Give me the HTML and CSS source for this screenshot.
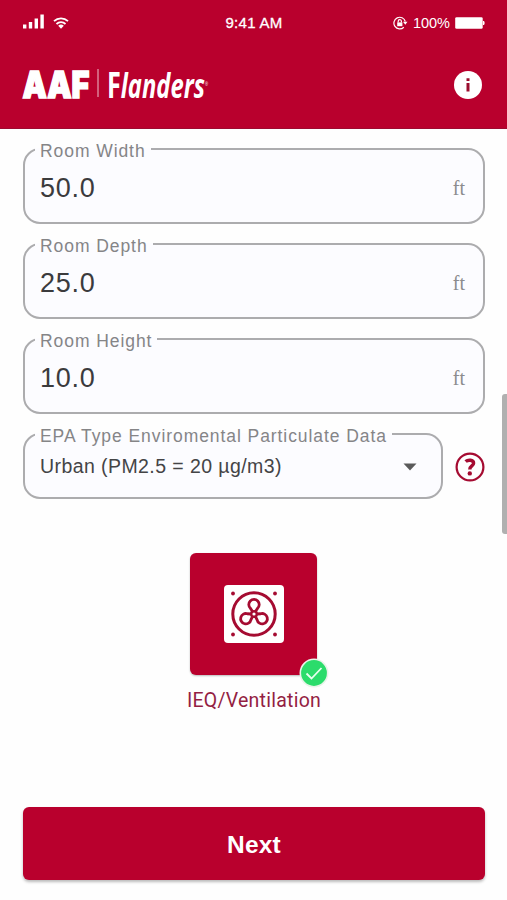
FILE: index.html
```html
<!DOCTYPE html>
<html lang="en">
<head>
<meta charset="utf-8">
<title>AAF Flanders</title>
<link rel="stylesheet" href="styles.css">
</head>
<body>
<header class="header">
  <div class="status">
    <div class="status-left">
      <svg width="22" height="16" viewBox="0 0 22 16" fill="#fff"><rect x="0" y="10.5" width="3.4" height="4"/><rect x="5.8" y="8" width="3.4" height="6.5"/><rect x="11.6" y="4.5" width="3.4" height="10"/><rect x="17.4" y="0.5" width="3.4" height="14"/></svg>
      <svg class="wifi" width="16" height="12" viewBox="0 0 16 12" fill="none" stroke="#fff" stroke-width="1.8"><path d="M1 4.2a10.2 10.2 0 0 1 14 0M3.5 7a6.5 6.5 0 0 1 9 0"/><path d="M5.2 8.8a4 4 0 0 1 5.6 0L8 11.7z" fill="#fff" stroke="none"/></svg>
    </div>
    <div class="status-time">9:41 AM</div>
    <div class="status-right">
      <svg width="15" height="14" viewBox="0 0 15 14" fill="none" stroke="#fff" stroke-width="1.2"><path d="M10.8 11.2A5.8 5.8 0 1 1 12.3 5.5"/><path d="M10 5.8h4.5l-2.2 3z" fill="#fff" stroke="none"/><rect x="4.2" y="6.4" width="5.2" height="3.8" fill="#fff" stroke="none"/><path d="M5.2 6.6V5.2a1.6 1.6 0 0 1 3.2 0v1.4"/></svg>
      <span class="status-pct">100%</span>
      <svg width="30" height="12" viewBox="0 0 30 12" fill="#fff"><rect x="0.2" y="0.2" width="27.5" height="11.6" rx="1.4"/><path d="M28 4h1q1.3 2 0 4h-1z"/></svg>
    </div>
  </div>
  <div class="brand">
    <svg class="logo" width="190" height="36" viewBox="0 0 190 36" fill="#fff">
      <text class="logo-aaf" x="1.5" y="30.5" textLength="67" lengthAdjust="spacingAndGlyphs">AAF</text>
      <rect x="76.5" y="2" width="1" height="28" opacity=".75"/>
      <text class="logo-fl" x="86" y="30.5" textLength="101" lengthAdjust="spacingAndGlyphs"><tspan class="logo-f">F</tspan>landers<tspan class="logo-reg" dy="-12">®</tspan></text>
    </svg>
    <svg width="30" height="30" viewBox="0 0 30 30"><circle cx="15" cy="15" r="14" fill="#fff"/><path d="M13.5 8.2h3v2.8h-3zM13.5 13h3v8.5h-3z" fill="#9b0d2e"/></svg>
  </div>
</header>
<main class="form">
  <fieldset class="field"><legend>Room Width</legend><div class="row"><span class="value">50.0</span><span class="unit">ft</span></div></fieldset>
  <fieldset class="field"><legend>Room Depth</legend><div class="row"><span class="value">25.0</span><span class="unit">ft</span></div></fieldset>
  <fieldset class="field"><legend>Room Height</legend><div class="row"><span class="value">10.0</span><span class="unit">ft</span></div></fieldset>
  <div class="select-row">
    <fieldset class="field field-select"><legend>EPA Type Enviromental Particulate Data</legend><div class="row"><span class="choice">Urban (PM2.5 = 20 µg/m3)</span><svg width="14" height="8" viewBox="0 0 14 8"><path d="M.5.5h13L7 7.5z" fill="#5a5a5a"/></svg></div></fieldset>
    <svg class="help" width="30" height="30" viewBox="0 0 30 30" fill="none" stroke="#a50b31"><circle cx="15" cy="15" r="13.4" stroke-width="2.2"/><path d="M10.6 9.6c2.2-2 8-2.2 8 1.6 0 2.8-3.8 2.7-3.8 6.2" stroke-width="3.4"/><circle cx="14.8" cy="21.4" r="2.2" fill="#a50b31" stroke="none"/></svg>
  </div>
  <div class="option">
    <div class="tile">
      <svg width="60" height="58" viewBox="0 0 60 58"><rect width="60" height="58" rx="4" fill="#fff"/><g fill="#a50b31"><circle cx="9" cy="8.5" r="1.9"/><circle cx="51" cy="8.5" r="1.9"/><circle cx="9" cy="49.5" r="1.9"/><circle cx="51" cy="49.5" r="1.9"/></g><g fill="none" stroke="#a50b31" stroke-width="2.8"><circle cx="30" cy="29" r="21.2" stroke-width="3"/><path id="blade" d="M28.4 26.2L26.5 23.4A5.2 5.2 0 1 1 33.5 23.4L31.6 26.2"/><use href="#blade" transform="rotate(120 30 29)"/><use href="#blade" transform="rotate(240 30 29)"/><circle cx="30" cy="29" r="2.8" stroke-width="2.4"/></g></svg>
      <svg class="check" width="30" height="30" viewBox="0 0 30 30"><circle cx="15" cy="15" r="13.7" fill="#2bdc6b" stroke="#e9f3e9" stroke-width="1.6"/><path d="M7.5 15.5l5 5 10-10.5" fill="none" stroke="#e8fff0" stroke-width="1.8"/></svg>
    </div>
    <div class="option-label">IEQ/Ventilation</div>
  </div>
  <button class="next">Next</button>
  <div class="scrollbar"></div>
</main>
</body>
</html>
```
FILE: styles.css
```css
* { box-sizing: border-box; }
body { margin: 0; height: 900px; overflow: hidden; background: #fefefe; font-family: "Liberation Sans", Arial, sans-serif; }
.header { height: 129px; background: #b9002d; border-bottom: 1px solid #9d0a30; color: #fff; }
.status { display: grid; grid-template-columns: 1fr auto 1fr; align-items: center; height: 44px; padding: 0 22px 0 23px; }
.status-left { display: flex; align-items: center; gap: 8px; }
.wifi { margin-top: 2px; }
.status-time { font-size: 15px; letter-spacing: .3px; -webkit-text-stroke: .3px #fff; padding-top: 1px; }
.status-right { display: flex; align-items: center; justify-content: flex-end; gap: 5px; padding-top: 1px; }
.status-pct { font-size: 14.5px; }
.brand { display: flex; justify-content: space-between; align-items: center; height: 84px; padding: 0 24px 0 21px; }
.brand > svg { margin-bottom: 2px; }
.logo { overflow: visible; }
.logo-aaf { font: 900 37px Inter, sans-serif; stroke: #fff; stroke-width: 1.6px; }
.logo-fl { font: italic 700 34px "Open Sans", sans-serif; }
.logo-f { font: 700 36px "Open Sans", sans-serif; }
.logo-reg { font: 6px "Liberation Sans", sans-serif; }
.form { position: relative; height: 771px; padding: 10px 22px 0 23px; display: flex; flex-direction: column; }
.field { margin: 0 0 10px; padding: 0 18px 0 10px; min-width: 0; height: 85px; border: 2px solid #acacae; border-radius: 17px; background: #fcfcff; }
.field legend { height: 20px; line-height: 24px; padding: 0 5px; font-size: 17.5px; letter-spacing: .93px; color: #858587; white-space: nowrap; }
.row { display: flex; align-items: center; justify-content: space-between; height: 58px; padding-left: 5px; }
.value { font-size: 27px; letter-spacing: .7px; color: #3b3b3d; }
.unit { font: 20px "Liberation Serif", serif; color: #8c8c8e; }
.select-row { display: flex; gap: 12px; }
.field-select { width: 420px; height: 75px; padding-right: 24px; margin: 0; }
.field-select .row { height: 45px; }
.choice { font-size: 19.5px; letter-spacing: .42px; color: #444446; white-space: nowrap; }
.help { margin-top: 28px; flex: none; }
.option { width: 128px; margin: 54px auto 0 167px; }
.tile { position: relative; width: 127px; height: 122px; display: flex; align-items: center; justify-content: center; background: #b9002d; border-radius: 6px; box-shadow: 0 1px 2px #0004; }
.check { position: absolute; right: -12px; bottom: -13px; }
.option-label { width: 136px; margin: 14px 0 0 -4px; font: 19.5px/24px Roboto, sans-serif; letter-spacing: .25px; text-align: center; color: #941f43; white-space: nowrap; }
.next { margin-top: 94px; padding-top: 3px; height: 73px; width: 462px; border: 0; border-radius: 6px; background: #b9002d; color: #fff; font: 700 24.5px "Liberation Sans", sans-serif; letter-spacing: .2px; box-shadow: 0 2px 3px #0004; }
.scrollbar { position: absolute; right: 0; top: 265px; width: 5px; height: 140px; background: #b0b0b0; border-radius: 3px 0 0 3px; }
```
